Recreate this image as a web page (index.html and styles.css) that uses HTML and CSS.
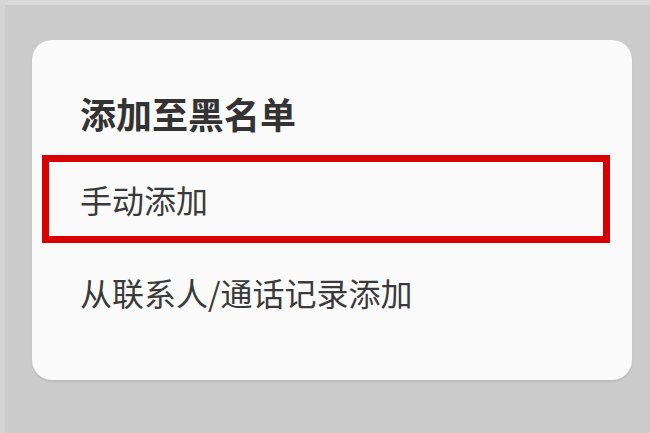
FILE: index.html
```html
<!DOCTYPE html>
<html lang="zh-CN">
<head>
<meta charset="utf-8">
<link rel="stylesheet" href="styles.css">
</head>
<body>
<div class="screen">
  <div class="dialog">
    <div class="title">添加至黑名单</div>
    <ul class="options">
      <li class="option highlighted">手动添加</li>
      <li class="option">从联系人/通话记录添加</li>
    </ul>
  </div>
</div>
</body>
</html>
```
FILE: styles.css
```css
html, body {
  margin: 0;
  padding: 0;
}
body {
  background: #cbcbcb;
  font-family: "Noto Sans CJK SC", "Noto Sans", sans-serif;
}
.screen {
  width: 650px;
  height: 433px;
  box-sizing: border-box;
  border-top: 5px solid #d9d9d9;
  border-left: 5px solid #d4d4d4;
  background: #cbcbcb;
  padding: 35px 0 0 27px;
  overflow: hidden;
}
.dialog {
  width: 600px;
  height: 340px;
  box-sizing: border-box;
  background: #fafafa;
  border-radius: 20px;
  box-shadow: 0 2px 2px rgba(0, 0, 0, 0.08);
  padding: 51px 0 0 0;
}
.title {
  margin: 0 0 0 48px;
  font-size: 36px;
  line-height: 44px;
  font-weight: 700;
  color: #333333;
}
.options {
  list-style: none;
  margin: 20px 0 0 10px;
  padding: 0;
  display: flex;
  flex-direction: column;
  gap: 5px;
}
.option {
  width: 568px;
  height: 88px;
  box-sizing: border-box;
  border: 7px solid transparent;
  padding-left: 31px;
  display: flex;
  align-items: center;
  font-size: 32px;
  color: #3a3a3a;
}
.option.highlighted {
  border-color: #d80000;
}
```
